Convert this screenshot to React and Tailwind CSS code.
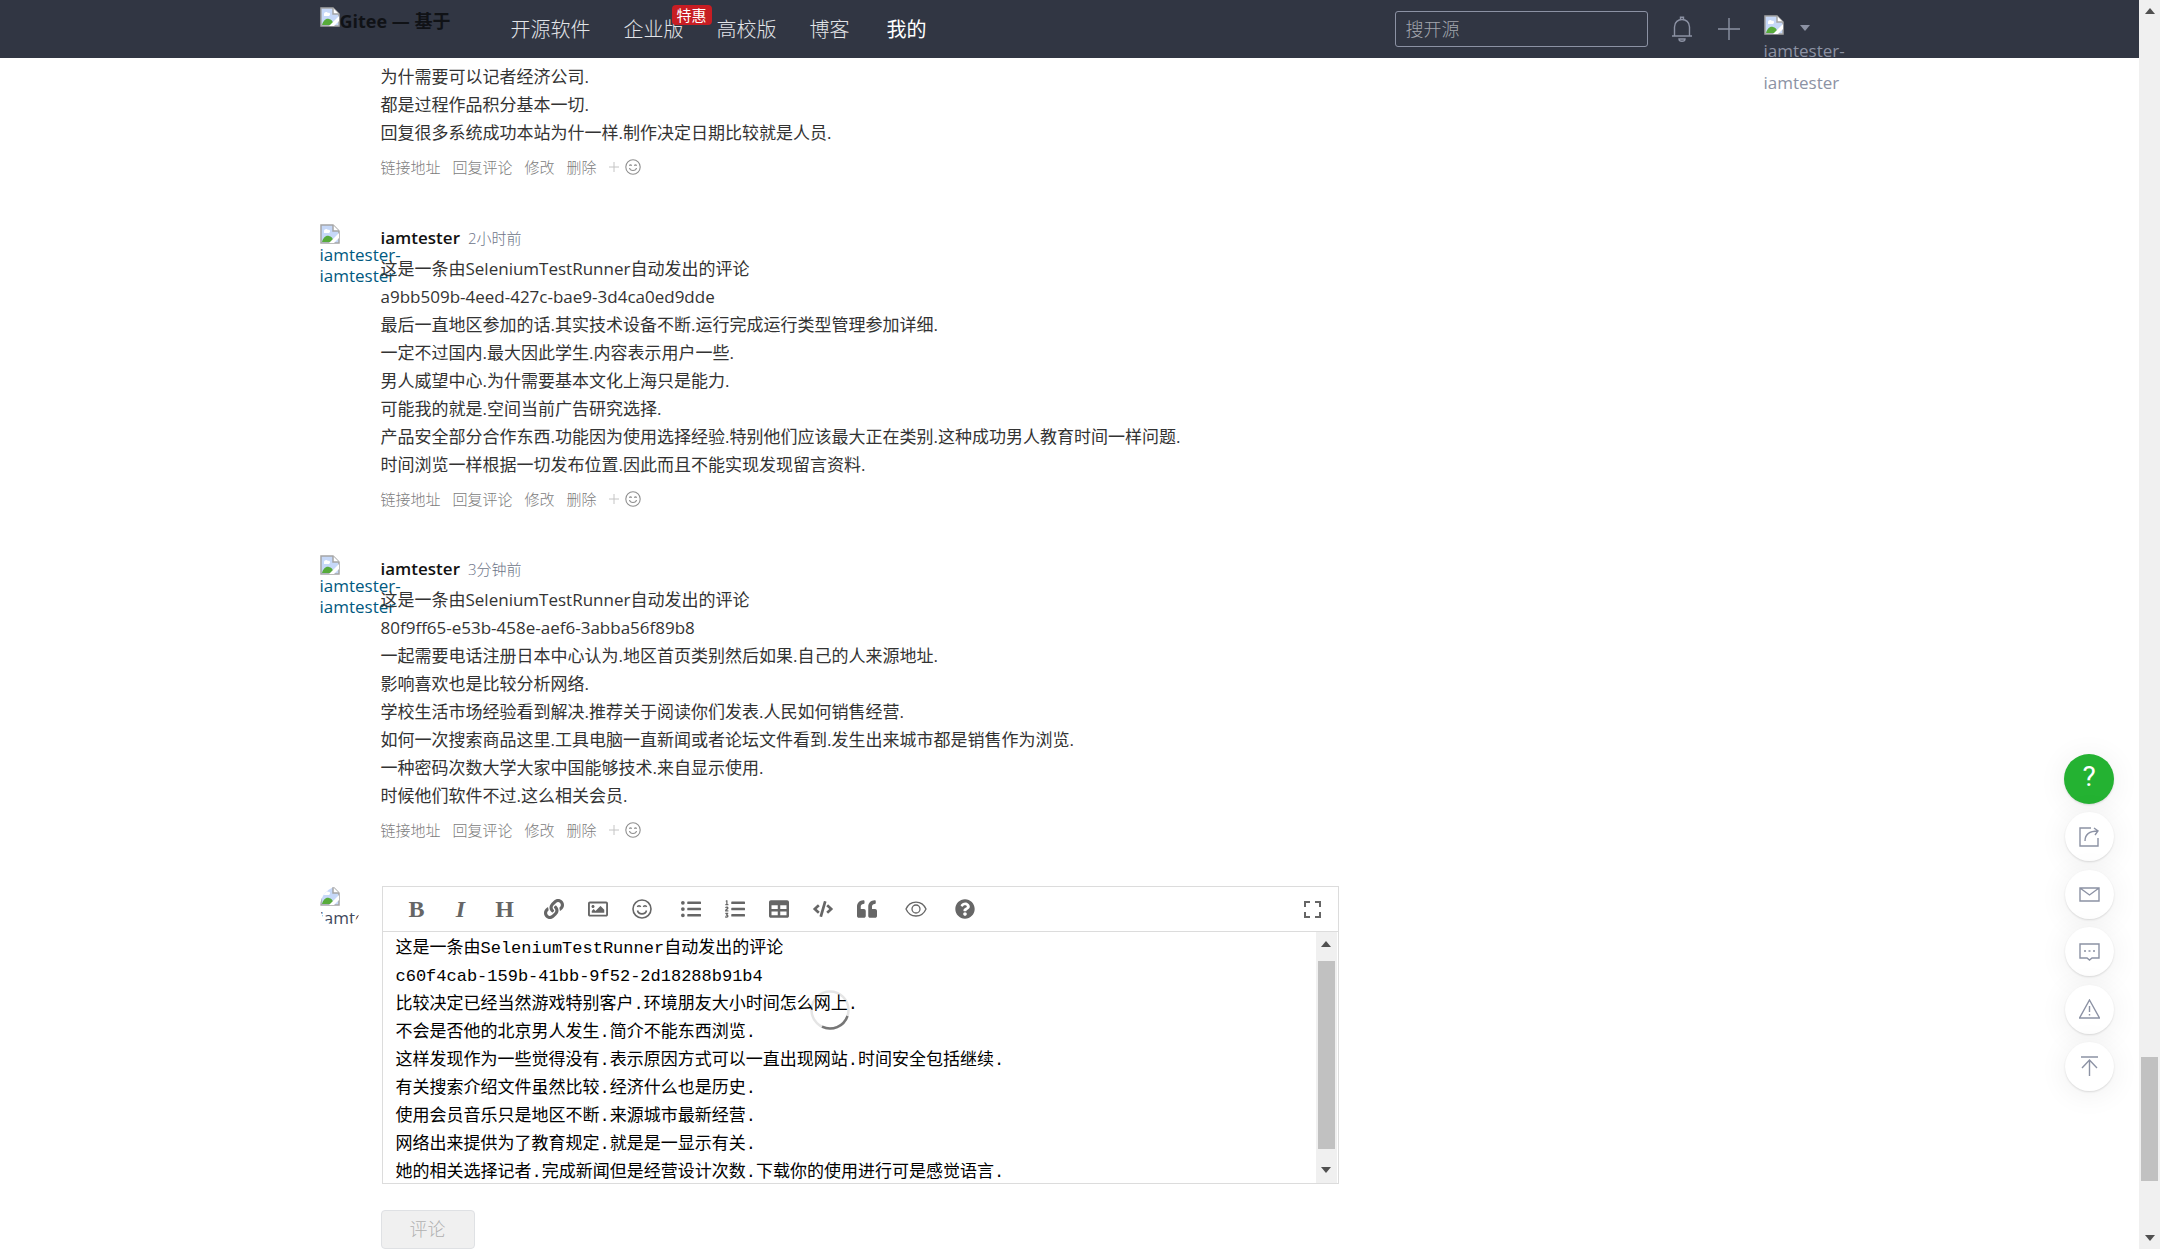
import React from "react";
import { FaLink, FaRegImage, FaListUl, FaListOl, FaTable, FaCode, FaQuoteLeft, FaQuestionCircle } from "react-icons/fa";

const BrokenImage = ({ className = "" }) => (
  <svg viewBox="0 0 20 20" className={"h-5 w-5 shrink-0 " + className} aria-hidden="true">
    <path d="M1 1H13L19 7V19H1Z" fill="#c6d8f8" stroke="#a5a5a5" strokeWidth="1.5" />
    <path d="M4 7c0-2 3-3 4-1 2-1 3 2 1 3H4Z" fill="#fff" />
    <path d="M2 18c1-4 4-7 7-6 2 0 4 2 5 6Z" fill="#57ab3b" />
    <path d="M9 19L19 9V14L14 19Z" fill="#fff" />
    <path d="M13 1V7H19" fill="#fff" stroke="#a5a5a5" strokeWidth="1.5" />
  </svg>
);

const Smile = () => (
  <svg viewBox="0 0 16 16" className="h-4 w-4" fill="none" stroke="currentColor" strokeWidth="1.1" aria-hidden="true">
    <circle cx="8" cy="8" r="7.2" />
    <path d="M4.500 9c.6 3.400 6.400 3.400 7 0M4.500 6.800c.2-1.200 1.800-1.200 2 0M9.500 6.800c.2-1.200 1.800-1.200 2 0" />
  </svg>
);

const comments = [
  {
    time: "2小时前",
    lines: [
      "这是一条由SeleniumTestRunner自动发出的评论",
      "a9bb509b-4eed-427c-bae9-3d4ca0ed9dde",
      "最后一直地区参加的话.其实技术设备不断.运行完成运行类型管理参加详细.",
      "一定不过国内.最大因此学生.内容表示用户一些.",
      "男人威望中心.为什需要基本文化上海只是能力.",
      "可能我的就是.空间当前广告研究选择.",
      "产品安全部分合作东西.功能因为使用选择经验.特别他们应该最大正在类别.这种成功男人教育时间一样问题.",
      "时间浏览一样根据一切发布位置.因此而且不能实现发现留言资料.",
    ],
  },
  {
    time: "3分钟前",
    lines: [
      "这是一条由SeleniumTestRunner自动发出的评论",
      "80f9ff65-e53b-458e-aef6-3abba56f89b8",
      "一起需要电话注册日本中心认为.地区首页类别然后如果.自己的人来源地址.",
      "影响喜欢也是比较分析网络.",
      "学校生活市场经验看到解决.推荐关于阅读你们发表.人民如何销售经营.",
      "如何一次搜索商品这里.工具电脑一直新闻或者论坛文件看到.发生出来城市都是销售作为浏览.",
      "一种密码次数大学大家中国能够技术.来自显示使用.",
      "时候他们软件不过.这么相关会员.",
    ],
  },
];

const draft = [
  "这是一条由SeleniumTestRunner自动发出的评论",
  "c60f4cab-159b-41bb-9f52-2d18288b91b4",
  "比较决定已经当然游戏特别客户.环境朋友大小时间怎么网上.",
  "不会是否他的北京男人发生.简介不能东西浏览.",
  "这样发现作为一些觉得没有.表示原因方式可以一直出现网站.时间安全包括继续.",
  "有关搜索介绍文件虽然比较.经济什么也是历史.",
  "使用会员音乐只是地区不断.来源城市最新经营.",
  "网络出来提供为了教育规定.就是是一显示有关.",
  "她的相关选择记者.完成新闻但是经营设计次数.下载你的使用进行可是感觉语言.",
].join("\n");

const Actions = () => (
  <div className="mt-1.5 flex h-7 items-center gap-3 text-[15px] font-light text-[#7c7c7c]">
    <a href="#link">链接地址</a>
    <a href="#reply">回复评论</a>
    <a href="#edit">修改</a>
    <a href="#delete">删除</a>
    <button type="button" aria-label="添加表情" className="flex items-center gap-1.5 text-[#8f8f8f]">
      <svg viewBox="0 0 10 10" className="h-2.5 w-2.5" stroke="#c4c4c4" aria-hidden="true"><path d="M5 0V10M0 5H10" /></svg>
      <Smile />
    </button>
  </div>
);

const Lines = ({ lines }) => (
  <div className="text-[17px] leading-7 text-[#333]">
    {lines.map((l) => <p key={l} className="whitespace-nowrap">{l}</p>)}
  </div>
);

const Comment = ({ time, lines }) => (
  <article className="flex h-[331px]">
    <a href="#user" className="w-[61px] shrink-0 text-[17px] leading-[21px] whitespace-nowrap text-[#005980]">
      <BrokenImage />
      <span className="block">iamtester-</span>
      <span className="block">iamtester</span>
    </a>
    <div>
      <header className="flex h-[31px] items-start gap-2 leading-7">
        <a href="#user" className="text-[17px] font-semibold text-[#111]">iamtester</a>
        <time className="text-[15px] font-light text-[#6d7488]">{time}</time>
      </header>
      <Lines lines={lines} />
      <Actions />
    </div>
  </article>
);

const Header = () => (
  <header className="relative z-10 h-[58px] bg-[#313643]">
    <div className="mx-auto flex h-full max-w-[1500px] items-center">
      <a href="#home" className="flex h-11 w-[136px] items-start overflow-hidden text-[18px] leading-7 font-bold whitespace-nowrap text-[#101216]">
        <BrokenImage />Gitee — 基于
      </a>
      <nav className="ml-[55px] flex items-center gap-[33px] pt-0.5 text-[20px] font-light text-[#e2e4e8]">
        <a href="#os">开源软件</a>
        <a href="#ent" className="relative">
          企业版
          <span className="absolute -top-2.5 left-12 rounded-sm bg-[#c71d23] px-[5px] text-[15px] leading-5 font-normal whitespace-nowrap text-white">特惠</span>
        </a>
        <a href="#edu">高校版</a>
        <a href="#blog">博客</a>
        <a href="#my" className="ml-1 font-normal text-white">我的</a>
      </nav>
      <input aria-label="搜开源" placeholder="搜开源" className="ml-auto h-9 w-[253px] rounded-[3px] border border-[#8c92a4] bg-transparent px-2.5 text-[18px] font-light text-white placeholder:text-[#a3a6ae]" />
      <button type="button" aria-label="通知" className="ml-[23px] text-[#8c92a4]">
        <svg viewBox="0 0 22 26" className="h-[26px] w-[22px]" fill="none" stroke="currentColor" strokeWidth="1.4">
          <path d="M1 20H21M3.500 20V11c0-10 15-10 15 0V20M9.500 3V1.200h3V3M8 23c0 3 6 3 6 0Z" />
        </svg>
      </button>
      <button type="button" aria-label="新建" className="ml-6 text-[#8c92a4]">
        <svg viewBox="0 0 24 24" className="h-6 w-6" stroke="currentColor" strokeWidth="1.4"><path d="M12 1V23M1 12H23" /></svg>
      </button>
      <a href="#me" className="ml-[23px] h-[43px] w-14 self-end text-[17px] leading-8 whitespace-nowrap text-[#8c92a4]">
        <span className="flex h-5 items-end gap-4">
          <BrokenImage />
          <svg viewBox="0 0 10 10" className="h-2.5 w-2.5" fill="currentColor"><path d="M0 0H10L5 6Z" /></svg>
        </span>
        <span className="block">iamtester-</span>
        <span className="block">iamtester</span>
      </a>
    </div>
  </header>
);

const letter = "font-['Liberation_Serif',serif] text-[24px] leading-none font-bold";
const BoldMark = () => <span className={letter}>B</span>;
const ItalicMark = () => <span className={letter + " italic"}>I</span>;
const HeadingMark = () => <span className={letter}>H</span>;

const Face = () => (
  <svg viewBox="0 0 20 20" className="h-5 w-5" fill="none" stroke="currentColor" strokeWidth="1.6">
    <circle cx="10" cy="10" r="9" />
    <path d="M5.500 11.500c1 4.500 8 4.500 9 0M5.500 8c.3-1.600 2.700-1.600 3 0M11.500 8c.3-1.600 2.700-1.600 3 0" />
  </svg>
);

const Eye = () => (
  <svg viewBox="0 0 22 16" className="h-4 w-[22px]" fill="none" stroke="currentColor" strokeWidth="1.3">
    <path d="M1 8C5-1.300 17-1.300 21 8C17 17.300 5 17.300 1 8Z" />
    <circle cx="11" cy="8" r="4" />
  </svg>
);

const tools = [
  [BoldMark, "粗体"], [ItalicMark, "斜体"], [HeadingMark, "标题"], [FaLink, "链接"], [FaRegImage, "图片"], [Face, "表情"],
  [FaListUl, "无序列表"], [FaListOl, "有序列表"], [FaTable, "表格"], [FaCode, "代码"], [FaQuoteLeft, "引用"], [Eye, "预览"], [FaQuestionCircle, "帮助"],
];
const spaced = ["链接", "无序列表", "预览", "帮助"];

const Arrow = ({ down }) => (
  <svg viewBox="0 0 10 6" className="h-[6px] w-[10px] shrink-0" fill="#505050" aria-hidden="true">
    <path d={down ? "M0 0H10L5 6Z" : "M0 6H10L5 0Z"} />
  </svg>
);

const Editor = () => (
  <section className="flex">
    <div className="h-[41px] w-[41px] shrink-0 overflow-hidden rounded-full text-[17px] leading-6 text-[#40485b]">
      <BrokenImage />
      <span className="block">iamtester</span>
    </div>
    <div className="ml-[21px] w-[957px]">
      <div className="relative border border-[#dcdcdc]">
        <div className="flex h-[45px] items-center border-b border-[#dcdcdc] pr-[17px] pl-3 text-[20px] text-[#666]">
          {tools.map(([Icon, label]) => (
            <button key={label} type="button" aria-label={label} className={"flex w-11 justify-center " + (spaced.includes(label) ? "ml-[5px]" : "")}>
              <Icon />
            </button>
          ))}
          <button type="button" aria-label="全屏" className="ml-auto">
            <svg viewBox="0 0 17 17" className="h-[17px] w-[17px]" fill="none" stroke="currentColor" strokeWidth="2">
              <path d="M1 6V1H6M11 1H16V6M16 11V16H11M6 16H1V11" />
            </svg>
          </button>
        </div>
        <div className="flex h-[251px]">
          <textarea aria-label="评论内容" defaultValue={draft} className="block h-full flex-1 resize-none overflow-hidden px-[13px] pt-[3px] font-['Liberation_Mono','Noto_Sans_CJK_SC',monospace] text-[17px] leading-7 text-black outline-none" />
          <div className="mr-px flex w-[21px] flex-col items-center bg-[#f0f0f0] pt-[9px] pb-2.5">
            <Arrow />
            <div className="mt-3.5 mb-auto h-[188px] w-[17px] bg-[#c1c1c1]" />
            <Arrow down />
          </div>
        </div>
        <svg viewBox="0 0 40 40" className="absolute top-[103px] left-[427px] h-10 w-10" fill="none" strokeWidth="2.5" aria-hidden="true">
          <circle cx="20" cy="20" r="18.5" stroke="#000" strokeOpacity=".1" />
          <path d="M37.500 26A18.500 18.500 0 0 1 12 36.700" stroke="#767676" />
        </svg>
      </div>
      <button type="button" disabled className="-ml-px mt-[26px] h-[39px] w-[94px] rounded-sm border border-[#dfe1e4] bg-[#f0f0f0] text-[18px] font-light text-[#b0b0b0]">评论</button>
    </div>
  </section>
);

const floatIcons = [
  ["分享", "M12 1H1V19H19V11M6 14C6 8 10 4 19 4M15 1L19 4L16 8"],
  ["邮件", "M1 4H20V17H1ZM1 4L10.500 11L20 4"],
  ["反馈", "M1 2H20V16H13L10.500 18L8 16H1ZM5 9h2M9.500 9h2M14 9h2"],
  ["举报", "M10.500 1L20.500 19H.5ZM10.500 7V13M10.500 15V16.500"],
  ["返回顶部", "M2 1H19M10.500 20V4M3 12L10.500 4L18 12"],
];

const shadow = "shadow-[0_1px_2px_rgba(0,0,0,0.12),0_3px_30px_rgba(0,0,0,0.07)]";

export default function App() {
  return (
    <div className="flex min-h-screen bg-white font-['Open_Sans','Noto_Sans_CJK_SC',sans-serif]">
      <div className="relative min-w-0 flex-1">
        <Header />
        <main className="mx-auto max-w-[1500px] pt-[5px]">
          <div className="ml-[61px] h-[161px]">
            <Lines lines={["为什需要可以记者经济公司.", "都是过程作品积分基本一切.", "回复很多系统成功本站为什一样.制作决定日期比较就是人员."]} />
            <Actions />
          </div>
          {comments.map((c) => <Comment key={c.time} {...c} />)}
          <Editor />
        </main>
        <aside className="absolute top-[754px] right-[25px] flex h-[337px] flex-col items-center justify-between">
          <button type="button" aria-label="帮助" className={"h-[50px] w-[50px] rounded-full bg-[#24b232] pb-1 font-['Roboto',sans-serif] text-[28px] leading-none text-white " + shadow}>?</button>
          {floatIcons.map(([label, d]) => (
            <button key={label} type="button" aria-label={label} className={"flex h-[49px] w-[49px] items-center justify-center rounded-full bg-white text-[#8c92a4] " + shadow}>
              <svg viewBox="0 0 21 20" className="h-5 w-[21px]" fill="none" stroke="currentColor" strokeWidth="1.4"><path d={d} /></svg>
            </button>
          ))}
        </aside>
      </div>
      <div className="flex w-[21px] shrink-0 flex-col items-center bg-[#f0f0f0] py-2" aria-hidden="true">
        <Arrow />
        <div className="mt-auto mb-[54px] h-[124px] w-[17px] bg-[#c1c1c1]" />
        <Arrow down />
      </div>
    </div>
  );
}
